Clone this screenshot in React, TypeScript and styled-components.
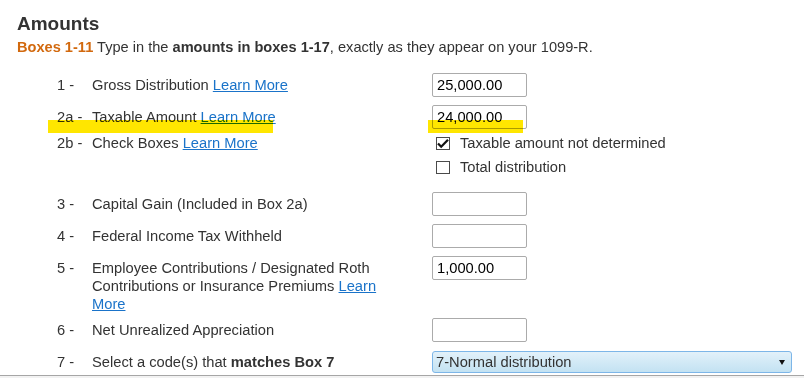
import React from "react";
import styled, { createGlobalStyle } from "styled-components";

const GlobalStyle = createGlobalStyle`
  html, body { margin: 0; padding: 0; background: #fff; }
  body {
    font-family: "Liberation Sans", Arial, sans-serif;
    color: #333;
    overflow: hidden;
  }
`;

const Page = styled.div`
  position: relative;
  width: 804px;
  height: 378px;
  overflow: hidden;
  display: flex;
  flex-direction: column;
`;

const Section = styled.section`
  padding: 12.7px 0 0 17px;
`;

const Heading = styled.h2`
  margin: 0;
  font-size: 19px;
  line-height: 22px;
  font-weight: 700;
  color: #333;
`;

const Intro = styled.p`
  margin: 3.5px 0 0;
  font-size: 14.6px;
  line-height: 18px;
  color: #333;
  b { font-weight: 700; }
`;

const BoxTag = styled.b`
  color: #d2690e;
`;

const FieldList = styled.div`
  margin: 17px 0 0 40px;
  display: flex;
  flex-direction: column;
`;

const Row = styled.div<{ $mt: number; $top?: boolean }>`
  margin-top: ${(p) => p.$mt}px;
  display: grid;
  grid-template-columns: 35px 340px auto;
  align-items: ${(p) => (p.$top ? "start" : "center")};
  font-size: 14.7px;
  line-height: 18px;
  color: #333;
`;

const Num = styled.span<{ $pt?: number }>`
  padding-top: ${(p) => p.$pt ?? 0}px;
`;

const Label = styled.span<{ $pt?: number }>`
  max-width: 300px;
  padding-top: ${(p) => p.$pt ?? 0}px;
  b { font-weight: 700; }
`;

const Link = styled.a`
  color: #1a73c9;
  text-decoration: underline;
  cursor: pointer;
`;

const AmountInput = styled.div`
  box-sizing: border-box;
  width: 95px;
  height: 24px;
  border: 1px solid #ababab;
  border-radius: 2px;
  padding: 0 4px;
  font-size: 14.7px;
  line-height: 22px;
  color: #000;
  background: #fff;
`;

const CheckGroup = styled.div`
  display: flex;
  flex-direction: column;
  gap: 6px;
  padding-left: 4px;
`;

const CheckLine = styled.label`
  display: flex;
  align-items: center;
  gap: 10px;
  line-height: 18px;
`;

const Box = styled.span`
  box-sizing: border-box;
  width: 14px;
  height: 13px;
  border: 1px solid #4a4a4a;
  background: #fff;
  display: flex;
  align-items: center;
  justify-content: center;
`;

const SelectBox = styled.div`
  box-sizing: border-box;
  width: 360px;
  height: 22px;
  border: 1px solid #7db6e8;
  border-radius: 3px;
  background: linear-gradient(#e2f1fa, #c3e2f2);
  display: flex;
  align-items: center;
  justify-content: space-between;
  padding: 0 6px 0 3px;
  font-size: 14.7px;
  color: #333;
`;

const Caret = styled.span`
  width: 0;
  height: 0;
  border-left: 3.5px solid transparent;
  border-right: 3.5px solid transparent;
  border-top: 5px solid #111;
`;

const Footer = styled.div`
  margin-top: 2px;
  flex: 1;
  border-top: 1px solid #a6a6a6;
  background: #f2f2f2;
`;

const Highlight = styled.div<{ $x: number; $w: number }>`
  position: absolute;
  top: 120px;
  left: ${(p) => p.$x}px;
  width: ${(p) => p.$w}px;
  height: 12.5px;
  background: #ffe600;
  mix-blend-mode: multiply;
  pointer-events: none;
`;

const Check = () => (
  <svg width="12" height="11" viewBox="0 0 12 11">
    <path d="M1 5.5 L4.2 8.7 L11 1.8" fill="none" stroke="#111" strokeWidth="2.3" />
  </svg>
);

export default function App() {
  return (
    <>
      <GlobalStyle />
      <Page>
        <Section>
          <Heading>Amounts</Heading>
          <Intro>
            <BoxTag>Boxes 1-11</BoxTag> Type in the <b>amounts in boxes 1-17</b>, exactly as they appear on your 1099-R.
          </Intro>
          <FieldList>
            <Row $mt={0}>
              <Num>1 -</Num>
              <Label>
                Gross Distribution <Link>Learn More</Link>
              </Label>
              <AmountInput>25,000.00</AmountInput>
            </Row>
            <Row $mt={8}>
              <Num>2a -</Num>
              <Label>
                Taxable Amount <Link>Learn More</Link>
              </Label>
              <AmountInput>24,000.00</AmountInput>
            </Row>
            <Row $mt={5} $top>
              <Num>2b -</Num>
              <Label>
                Check Boxes <Link>Learn More</Link>
              </Label>
              <CheckGroup>
                <CheckLine>
                  <Box>
                    <Check />
                  </Box>
                  Taxable amount not determined
                </CheckLine>
                <CheckLine>
                  <Box />
                  Total distribution
                </CheckLine>
              </CheckGroup>
            </Row>
            <Row $mt={16}>
              <Num>3 -</Num>
              <Label>Capital Gain (Included in Box 2a)</Label>
              <AmountInput />
            </Row>
            <Row $mt={8}>
              <Num>4 -</Num>
              <Label>Federal Income Tax Withheld</Label>
              <AmountInput />
            </Row>
            <Row $mt={8} $top>
              <Num $pt={3}>5 -</Num>
              <Label $pt={3}>
                Employee Contributions / Designated Roth Contributions or Insurance Premiums <Link>Learn</Link>{" "}
                <Link>More</Link>
              </Label>
              <AmountInput>1,000.00</AmountInput>
            </Row>
            <Row $mt={5}>
              <Num>6 -</Num>
              <Label>Net Unrealized Appreciation</Label>
              <AmountInput />
            </Row>
            <Row $mt={9}>
              <Num>7 -</Num>
              <Label>
                Select a code(s) that <b>matches Box 7</b>
              </Label>
              <SelectBox>
                <span>7-Normal distribution</span>
                <Caret />
              </SelectBox>
            </Row>
          </FieldList>
        </Section>
        <Footer />
        <Highlight $x={48} $w={225} />
        <Highlight $x={428} $w={95} />
      </Page>
    </>
  );
}
